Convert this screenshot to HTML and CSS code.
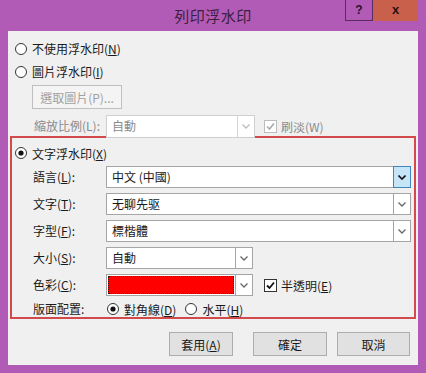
FILE: index.html
```html
<!DOCTYPE html>
<html lang="zh-Hant">
<head>
  <meta charset="UTF-8">
  <title>列印浮水印</title>
  <link rel="stylesheet" href="styles.css">
</head>
<body>
  <div class="window">
    <div class="titlebar">
      <div class="title">列印浮水印</div>
      <div class="caption-btns">
        <div class="cap-help">?</div>
        <div class="cap-close">x</div>
      </div>
    </div>
    <div class="client">
      <div class="opt-row">
        <svg class="radio" width="12" height="12" viewBox="0 0 12 12"><circle cx="6" cy="6" r="5.5" fill="#fff" stroke="#333"/></svg>
        <span>不使用浮水印(<u>N</u>)</span>
      </div>
      <div class="opt-row">
        <svg class="radio" width="12" height="12" viewBox="0 0 12 12"><circle cx="6" cy="6" r="5.5" fill="#fff" stroke="#333"/></svg>
        <span>圖片浮水印(<u>I</u>)</span>
      </div>
      <div class="pick-row">
        <div class="btn btn-disabled">選取圖片(P)...</div>
      </div>
      <div class="scale-row">
        <span class="scale-label">縮放比例(L):</span>
        <div class="combo combo-half combo-disabled">
          <span class="combo-text">自動</span>
          <span class="drop drop-disabled"><svg width="8" height="5" viewBox="0 0 8 5"><path d="M0.5 0.5 L4 4 L7.5 0.5" fill="none" stroke="#bbb" stroke-width="1.3"/></svg></span>
        </div>
        <span class="check-wrap check-disabled">
          <svg width="13" height="13" viewBox="0 0 13 13"><rect x="0.5" y="0.5" width="12" height="12" fill="#fff" stroke="#bcbcbc"/><path d="M3 6.5 L5.5 9 L10 3.5" fill="none" stroke="#aaa" stroke-width="1.6"/></svg>
          <span>刷淡(W)</span>
        </span>
      </div>

      <div class="text-box">
        <div class="opt-row text-opt">
          <svg class="radio" width="12" height="12" viewBox="0 0 12 12"><circle cx="6" cy="6" r="5.5" fill="#fff" stroke="#333"/><circle cx="6" cy="6" r="2.6" fill="#111"/></svg>
          <span>文字浮水印(<u>X</u>)</span>
        </div>
        <div class="field-grid">
          <span class="field-label">語言(<u>L</u>):</span>
          <div class="combo">
            <span class="combo-text">中文 (中國)</span>
            <span class="drop drop-hot"><svg width="8" height="5" viewBox="0 0 8 5"><path d="M0.5 0.5 L4 4 L7.5 0.5" fill="none" stroke="#111" stroke-width="1.6"/></svg></span>
          </div>

          <span class="field-label">文字(<u>T</u>):</span>
          <div class="combo">
            <span class="combo-text">无聊先驱</span>
            <span class="drop"><svg width="8" height="5" viewBox="0 0 8 5"><path d="M0.5 0.5 L4 4 L7.5 0.5" fill="none" stroke="#666" stroke-width="1.3"/></svg></span>
          </div>

          <span class="field-label">字型(<u>F</u>):</span>
          <div class="combo">
            <span class="combo-text">標楷體</span>
            <span class="drop"><svg width="8" height="5" viewBox="0 0 8 5"><path d="M0.5 0.5 L4 4 L7.5 0.5" fill="none" stroke="#666" stroke-width="1.3"/></svg></span>
          </div>

          <span class="field-label">大小(<u>S</u>):</span>
          <div class="combo combo-half">
            <span class="combo-text">自動</span>
            <span class="drop"><svg width="8" height="5" viewBox="0 0 8 5"><path d="M0.5 0.5 L4 4 L7.5 0.5" fill="none" stroke="#666" stroke-width="1.3"/></svg></span>
          </div>

          <span class="field-label">色彩(<u>C</u>):</span>
          <div class="color-row">
            <div class="combo combo-half">
              <span class="swatch"></span>
              <span class="drop"><svg width="8" height="5" viewBox="0 0 8 5"><path d="M0.5 0.5 L4 4 L7.5 0.5" fill="none" stroke="#666" stroke-width="1.3"/></svg></span>
            </div>
            <span class="check-wrap">
              <svg width="13" height="13" viewBox="0 0 13 13"><rect x="0.5" y="0.5" width="12" height="12" fill="#fff" stroke="#333"/><path d="M3 6.5 L5.5 9 L10 3.5" fill="none" stroke="#111" stroke-width="1.8"/></svg>
              <span>半透明(<u>E</u>)</span>
            </span>
          </div>
        </div>
        <div class="layout-row">
          <span class="field-label">版面配置:</span>
          <span class="layout-opt">
            <svg class="radio" width="12" height="12" viewBox="0 0 12 12"><circle cx="6" cy="6" r="5.5" fill="#fff" stroke="#333"/><circle cx="6" cy="6" r="2.6" fill="#111"/></svg>
            <span>對角線(<u>D</u>)</span>
          </span>
          <span class="layout-opt">
            <svg class="radio" width="12" height="12" viewBox="0 0 12 12"><circle cx="6" cy="6" r="5.5" fill="#fff" stroke="#333"/></svg>
            <span>水平(<u>H</u>)</span>
          </span>
        </div>
      </div>

      <div class="button-row">
        <div class="btn btn-apply">套用(<u>A</u>)</div>
        <div class="btn btn-ok">確定</div>
        <div class="btn btn-cancel">取消</div>
      </div>
    </div>
  </div>
</body>
</html>
```

FILE: styles.css
```css
body {
  margin: 0;
  background-color: #b25bb6;
  font-family: "Noto Sans CJK TC", "Liberation Sans", sans-serif;
  font-size: 12px;
  color: #1a1a1a;
}
u {
  text-decoration: underline;
  text-underline-offset: 1px;
}
.window {
  width: 426px;
  height: 373px;
  overflow: hidden;
}
.titlebar {
  height: 31px;
  display: flex;
  justify-content: center;
  position: relative;
}
.title {
  font-size: 15px;
  color: #3b1e40;
  line-height: 31px;
  letter-spacing: 0.5px;
}
.caption-btns {
  position: absolute;
  top: 0;
  right: 8px;
  display: flex;
  height: 21px;
}
.cap-help {
  width: 28px;
  height: 21px;
  box-sizing: border-box;
  border: 1px solid #5a2a60;
  border-top: none;
  font-family: "Liberation Sans", sans-serif;
  font-weight: bold;
  font-size: 12px;
  color: #2a1030;
  text-align: center;
  line-height: 20px;
}
.cap-close {
  width: 45px;
  height: 21px;
  background-color: #c8604c;
  font-family: "Liberation Sans", sans-serif;
  font-weight: bold;
  font-size: 13px;
  color: #2a1010;
  text-align: center;
  line-height: 19px;
}
.client {
  margin: 0 8px;
  width: 410px;
  height: 334px;
  background-color: #f0f0f0;
  box-sizing: border-box;
  padding-top: 6px;
}
.opt-row {
  height: 23px;
  display: flex;
  align-items: center;
  padding-left: 7px;
}
.radio {
  flex: none;
  margin-right: 5px;
}
.pick-row {
  padding-left: 24px;
  margin-top: 2px;
  height: 24px;
}
.btn {
  box-sizing: border-box;
  height: 24px;
  border: 1px solid #adadad;
  background-color: #e1e1e1;
  display: flex;
  align-items: center;
  justify-content: center;
  color: #1a1a1a;
}
.btn-disabled {
  width: 90px;
  border-color: #bfbfbf;
  background-color: #f4f4f4;
  color: #a0a0a0;
}
.scale-row {
  margin-top: 6px;
  height: 21px;
  display: flex;
  align-items: flex-start;
  padding-left: 26px;
  color: #8a8a8a;
}
.scale-label {
  width: 72px;
  line-height: 22px;
}
.combo {
  box-sizing: border-box;
  height: 22px;
  flex: 1;
  border: 1px solid #a5a5a5;
  background-color: #fff;
  display: flex;
  align-items: stretch;
}
.combo-half {
  flex: none;
  width: 147px;
}
.combo-disabled {
  width: 149px;
  height: 23px;
  border-color: #cfcfcf;
  color: #8a8a8a;
}
.combo-text {
  flex: 1;
  padding-left: 5px;
  line-height: 20px;
}
.drop {
  box-sizing: border-box;
  width: 17px;
  border-left: 1px solid #a5a5a5;
  display: flex;
  align-items: center;
  justify-content: center;
}
.drop-disabled {
  border-left-color: #d5d5d5;
}
.drop-hot {
  background-color: #c6e6f8;
  border: 1px solid #3e86c0;
  margin: -1px -1px -1px 0;
  width: 18px;
}
.check-wrap {
  display: flex;
  align-items: center;
  margin-left: 11px;
  height: 22px;
}
.check-wrap svg {
  margin-right: 4px;
}
.check-disabled {
  color: #8a8a8a;
  margin-left: 9px;
}
.text-box {
  margin: 0 2px;
  border: 2px solid #d24a4c;
  height: 183px;
  box-sizing: border-box;
  padding: 4px 3px 0 21px;
}
.text-opt {
  height: 22px;
  margin-left: -18px;
  padding-left: 0;
}
.field-grid {
  margin-top: 2px;
  display: grid;
  grid-template-columns: 73px 1fr;
  grid-auto-rows: 22px;
  row-gap: 5px;
}
.field-label {
  line-height: 22px;
}
.color-row {
  display: flex;
  align-items: center;
}
.swatch {
  flex: 1;
  margin: 1px;
  background-color: #ff0000;
  outline: 1px dotted #222;
  outline-offset: -1px;
}
.layout-row {
  margin-top: 4px;
  height: 18px;
  display: flex;
  align-items: center;
}
.layout-row .field-label {
  width: 74px;
  flex: none;
  line-height: 18px;
}
.layout-opt {
  display: flex;
  align-items: center;
  margin-right: 9px;
}
.button-row {
  margin-top: 13px;
  display: flex;
  padding-left: 161px;
}
.btn-apply {
  width: 64px;
}
.btn-ok {
  width: 74px;
  margin-left: 20px;
}
.btn-cancel {
  width: 73px;
  margin-left: 10px;
}
```
